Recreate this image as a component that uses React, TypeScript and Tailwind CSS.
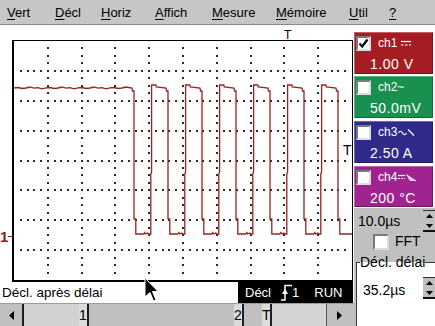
import React from "react";

const MENU = [
  { first: "V", rest: "ert", w: "w-[48px]" },
  { first: "D", rest: "écl", w: "w-[46px]" },
  { first: "H", rest: "oriz", w: "w-[54px]" },
  { first: "A", rest: "ffich", w: "w-[57px]" },
  { first: "M", rest: "esure", w: "w-[64px]" },
  { first: "M", rest: "émoire", w: "w-[73px]" },
  { first: "U", rest: "til", w: "w-[40px]" },
  { first: "?", rest: "", w: "w-[20px]" },
];

const W = 338;
const H = 239;

function gridDots() {
  let d = "";
  for (let i = 1; i < 10; i++) {
    const x = Math.round((i * W) / 10) - 1;
    for (let k = 1; k < 32; k++) {
      const y = Math.round((k * H) / 32) - 1;
      d += `M${x} ${y}h2v2h-2z`;
    }
  }
  for (let j = 1; j < 8; j++) {
    const y = Math.round((j * H) / 8) - 1;
    for (let k = 1; k < 50; k++) {
      const x = Math.round((k * W) / 50) - 1;
      d += `M${x} ${y}h2v2h-2z`;
    }
  }
  return d;
}

function tracePath() {
  const HI = 46;
  const LO = 193;
  const p: string[] = [`M0 ${HI + 1}`];
  const wig = [0.5, 1.5, 1, 0, 1.2, 0.6, 1.8, 0.8];
  for (let x = 4, i = 0; x < 116; x += 4, i++) p.push(`L${x} ${HI + wig[i % wig.length]}`);
  for (let k = 0; k < 7; k++) {
    const f = 120 + 34 * k;
    p.push(
      `L${f - 2} ${HI + 1}`,
      `L${f - 1.5} ${HI + 4}`,
      `L${f} ${HI + 4}`,
      `L${f} ${LO - 15}`,
      `L${f + 1.8} ${LO - 15}`,
      `L${f + 1.8} ${LO}`
    );
    if (k < 6) {
      const r = 136.8 + 34 * k;
      p.push(
        `L${r - 7} ${LO}`,
        `L${r - 6} ${LO - 1.5}`,
        `L${r - 5} ${LO}`,
        `L${r - 3} ${LO - 1}`,
        `L${r - 2} ${LO}`,
        `L${r} ${LO}`,
        `L${r} ${LO - 60}`,
        `L${r + 0.8} ${LO - 62}`,
        `L${r + 0.8} ${HI - 2}`,
        `L${r + 5} ${HI - 2}`,
        `L${r + 5.5} ${HI}`
      );
    } else {
      p.push(`L${W} ${LO}`);
    }
  }
  return p.join(" ");
}

function MenuBar() {
  return (
    <div className="h-[25px] shrink-0 flex bg-[#c6c6c6] border-b border-[#8a8a8a] pl-[7px] pt-[5px] text-[13px] leading-[15px]">
      {MENU.map((m) => (
        <span key={m.first + m.rest} className={m.w}>
          <span className="underline underline-offset-[2px]">{m.first}</span>
          {m.rest}
        </span>
      ))}
    </div>
  );
}

function Scope() {
  return (
    <div className="flex h-[242px]">
      <div className="w-[12px] pt-[188px]">
        <div className="flex items-center text-[#8b1a1a]">
          <span className="text-[15px] leading-[17px] font-bold">1</span>
          <span className="w-[4px] h-[1.5px] bg-[#8b1a1a]" />
        </div>
      </div>
      <div className="relative w-[341px] border border-l-2 border-b-2 border-black">
        <svg width={W} height={H} className="block">
          <path d={gridDots()} fill="#2a2a2a" shapeRendering="crispEdges" />
          <path d={tracePath()} fill="none" stroke="#952424" strokeWidth="1.3" />
        </svg>
        <span className="absolute left-[329px] top-[101px] text-[14px] leading-[16px]">T</span>
      </div>
    </div>
  );
}

function Cursor() {
  return (
    <svg width="15" height="25" viewBox="0 0 15 25" className="absolute left-[144px] top-[252px]">
      <path d="M1 1 L1 20 L6 15.5 L9.5 24 L12 23 L8.5 14.5 L14 14.5 Z" fill="#000" stroke="#fff" strokeWidth="1" />
    </svg>
  );
}

function StatusRow() {
  return (
    <div className="h-[21px] flex items-center">
      <span className="ml-[2px] text-[13.5px] leading-[16px]">Décl. après délai</span>
      <div className="ml-auto mr-[1px] w-[115px] h-[21px] bg-black text-white flex items-center pl-[7px] text-[13px] leading-[16px]">
        <span>Décl</span>
        <svg width="11" height="17" viewBox="0 0 11 17" className="ml-[10px]">
          <path d="M0 16H4V1.5H11" stroke="#fff" strokeWidth="1.5" fill="none" />
          <path d="M1 10L4 5L7 10Z" fill="#fff" />
        </svg>
        <span>1</span>
        <span className="ml-[15px]">RUN</span>
      </div>
    </div>
  );
}

function ScrollBar() {
  return (
    <div className="h-[23px] flex bg-[#c0c0c0] border-t border-[#9c9c9c] text-[14px] leading-[22px]">
      <div className="w-[22px] flex items-center justify-center">
        <svg width="5" height="9">
          <path d="M5 0V9L0 4.5Z" fill="#000" />
        </svg>
      </div>
      <div className="w-[2px] bg-[#1e1e1e]" />
      <div className="w-[55px] bg-[#d2d2d2]" />
      <span className="w-[8px] text-center bg-[#dcdcdc]">1</span>
      <div className="w-[2px] bg-[#1e1e1e]" />
      <div className="w-[145px]" />
      <span className="w-[8px] text-center bg-[#dcdcdc]">2</span>
      <div className="w-[2px] bg-[#1e1e1e]" />
      <div className="w-[18px]" />
      <span className="w-[8px] text-center bg-[#dcdcdc]">T</span>
      <div className="w-[2px] bg-[#1e1e1e]" />
      <div className="w-[55px] bg-[#d4d4d4] border-r border-[#555]" />
      <div className="w-[24px] flex items-center justify-center">
        <svg width="5" height="9">
          <path d="M0 0V9L5 4.5Z" fill="#000" />
        </svg>
      </div>
      <div className="flex-1" />
    </div>
  );
}

function Checkbox({ checked = false, size = "w-[15px] h-[15px]" }: { checked?: boolean; size?: string }) {
  return (
    <div
      className={`${size} shrink-0 bg-white border-2 border-t-[#7a7a7a] border-l-[#7a7a7a] border-b-[#dcdcdc] border-r-[#dcdcdc] flex items-center justify-center`}
    >
      {checked && (
        <svg width="11" height="11" viewBox="0 0 11 11">
          <path d="M1.5 5.5 L4.2 8.5 L9.5 1.5" stroke="#000" strokeWidth="2.2" fill="none" />
        </svg>
      )}
    </div>
  );
}

function Symbol({ kind }: { kind: string }) {
  if (kind === "dc")
    return (
      <svg width="10" height="7" className="ml-[4px]">
        <path d="M0 1.5H10" stroke="#fff" strokeWidth="1.2" />
        <path d="M0 5H2.5M4 5H6.5M8 5H10" stroke="#fff" strokeWidth="1.2" />
      </svg>
    );
  if (kind === "acslope")
    return (
      <svg width="17" height="9" className="ml-[1px]">
        <path d="M0.5 5 q2 -3.5 4 0 t4 0" stroke="#fff" strokeWidth="1.2" fill="none" />
        <path d="M10 1.5 L16 7.5" stroke="#fff" strokeWidth="1.2" />
      </svg>
    );
  if (kind === "dcslope")
    return (
      <svg width="19" height="9" className="ml-[1px]">
        <path d="M0 2.5H7" stroke="#fff" strokeWidth="1.2" />
        <path d="M0 5.5H2M3 5.5H5M6 5.5H7" stroke="#fff" strokeWidth="1.2" />
        <path d="M8 1.5 L18 8 L12 8 Z" fill="#fff" opacity="0.55" />
        <path d="M8 1.5 L18 8 M10 4 L13 8 M12 4.5 L15 8" stroke="#fff" strokeWidth="1" />
      </svg>
    );
  return null;
}

const CH = [
  { name: "ch1", value: "1.00 V", box: "bg-[#a51d23] h-[42px]", checked: true, sym: "dc" },
  { name: "ch2~", value: "50.0mV", box: "bg-[#189150] h-[42px] mt-[2px]", checked: false, sym: "" },
  { name: "ch3", value: "2.50 A", box: "bg-[#302b8a] h-[42px] mt-[3px]", checked: false, sym: "acslope" },
  { name: "ch4", value: "200 °C", box: "bg-[#a02390] h-[41px] mt-[3px]", checked: false, sym: "dcslope" },
];

function Spinner() {
  return (
    <div className="w-[12px] h-[22px] flex flex-col shrink-0">
      <div className="h-[11px] bg-[#c0c0c0] border-t border-[#303030] flex items-center justify-center">
        <svg width="7" height="4">
          <path d="M0 4 L3.5 0 L7 4Z" fill="#000" />
        </svg>
      </div>
      <div className="h-[11px] bg-[#c0c0c0] border-b-2 border-[#101010] flex items-center justify-center">
        <svg width="7" height="4">
          <path d="M0 0 L3.5 4 L7 0Z" fill="#000" />
        </svg>
      </div>
    </div>
  );
}

function RightPanel() {
  return (
    <div className="w-[81px] flex flex-col bg-white pt-[7px]">
      {CH.map((c) => (
        <div
          key={c.name}
          className={`${c.box} mr-[2px] flex flex-col pl-[2px] pt-[4px] text-white shadow-[inset_1px_1px_0_rgba(255,255,255,0.3),inset_-1px_-1px_0_rgba(0,0,0,0.3)]`}
        >
          <div className="flex items-center h-[15px]">
            <Checkbox checked={c.checked} />
            <span className="ml-[7px] text-[12px] leading-[15px]">{c.name}</span>
            <Symbol kind={c.sym} />
          </div>
          <span className="ml-[14px] mt-[5px] text-[14px] leading-[17px] tracking-[0.5px]">{c.value}</span>
        </div>
      ))}
      <div className="mt-[1px] flex-1 flex flex-col bg-[#c0c0c0]">
        <div className="h-[25px] flex items-start">
          <span className="ml-[4px] mt-[5px] text-[14px] leading-[16px]">10.0µs</span>
          <div className="ml-auto mt-[2px]">
            <Spinner />
          </div>
        </div>
        <div className="h-[22px] flex items-start">
          <div className="ml-[19px] mt-[1px]">
            <Checkbox size="w-[16px] h-[16px]" />
          </div>
          <span className="ml-[6px] text-[14px] leading-[16px]">FFT</span>
        </div>
        <fieldset className="ml-[2px] flex-1 min-w-0 border-t border-l border-[#3a3a3a] bg-white">
          <legend className="ml-[3px] text-[14px] leading-[14px]">Décl. délai</legend>
          <div className="flex items-start">
            <span className="ml-[6px] mt-[13px] text-[14px] leading-[16px]">35.2µs</span>
            <div className="ml-auto mt-[8px]">
              <Spinner />
            </div>
          </div>
        </fieldset>
      </div>
    </div>
  );
}

export default function App() {
  return (
    <div className="w-[435px] h-[326px] overflow-hidden bg-white flex flex-col text-black font-['Liberation_Sans',Arial,sans-serif] select-none">
      <MenuBar />
      <div className="flex flex-1 min-h-0">
        <div className="relative w-[354px] flex flex-col">
          <div className="h-[15px] pl-[284px] pt-[4px] text-[12px] leading-none">T</div>
          <Scope />
          <StatusRow />
          <ScrollBar />
          <Cursor />
        </div>
        <RightPanel />
      </div>
    </div>
  );
}
